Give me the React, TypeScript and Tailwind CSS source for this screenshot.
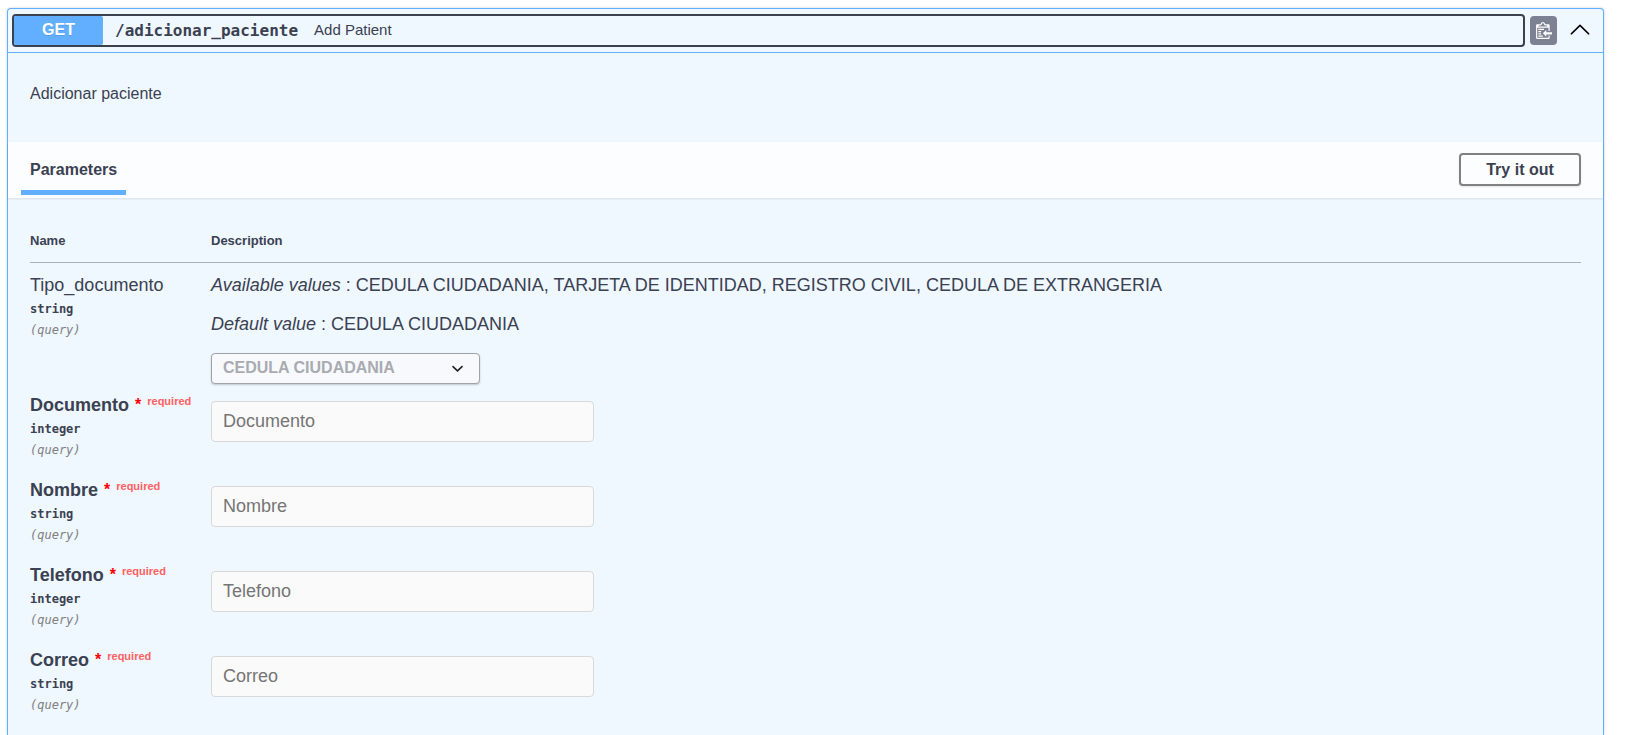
interface Param {
  name: string;
  type: string;
}

const requiredParams: Param[] = [
  { name: "Documento", type: "integer" },
  { name: "Nombre", type: "string" },
  { name: "Telefono", type: "integer" },
  { name: "Correo", type: "string" },
];

const documentTypes = [
  "CEDULA CIUDADANIA",
  "TARJETA DE IDENTIDAD",
  "REGISTRO CIVIL",
  "CEDULA DE EXTRANGERIA",
];

function ClipboardIcon() {
  return (
    <svg viewBox="0 1 14 15" className="h-[17px] w-4" aria-hidden="true">
      <path
        fill="#fff"
        fillRule="evenodd"
        d="M2 13h4v1H2v-1zm5-6H2v1h5V7zm2 3V8l-3 3 3 3v-2h5v-2H9zM4.5 9H2v1h2.5V9zM2 12h2.5v-1H2v1zm9 1h1v2c-.02.28-.11.52-.3.7-.19.18-.42.28-.7.3H1c-.55 0-1-.45-1-1V4c0-.55.45-1 1-1h3c0-1.11.89-2 2-2 1.11 0 2 .89 2 2h3c.55 0 1 .45 1 1v5h-1V6H1v9h10v-2zM2 5h8c0-.55-.45-1-1-1H8c-.55 0-1-.45-1-1s-.45-1-1-1-1 .45-1 1-.45 1-1 1H3c-.55 0-1 .45-1 1z"
      />
    </svg>
  );
}

function ArrowUpIcon() {
  return (
    <svg viewBox="0 0 20 20" className="size-[22px]" aria-hidden="true">
      <path d="M17.418 14.908c.272.268.709.268.979 0s.271-.701 0-.969l-7.908-7.797c-.27-.268-.707-.268-.979 0l-7.908 7.797c-.27.268-.27.701 0 .969.271.268.708.268.979 0L10 7.767l7.418 7.141z" />
    </svg>
  );
}

function SelectArrowIcon() {
  return (
    <svg
      viewBox="0 0 20 20"
      className="pointer-events-none absolute top-1 right-[11px] size-[23px]"
      aria-hidden="true"
    >
      <path
        fill="#222"
        d="M13.418 7.859c.271-.268.709-.268.978 0 .27.268.272.701 0 .969l-3.908 3.83c-.27.268-.707.268-.979 0l-3.908-3.83c-.27-.267-.27-.701 0-.969.271-.268.709-.268.978 0L10 11l3.418-3.141z"
      />
    </svg>
  );
}

function ParamMeta({ type }: { type: string }) {
  return (
    <div className="font-['DejaVu_Sans_Mono',monospace] text-xs">
      <div className="leading-6 font-bold">{type}</div>
      <div className="leading-[18px] text-[#808080] italic">(query)</div>
    </div>
  );
}

function RequiredRow({ name, type }: Param) {
  return (
    <tr>
      <td className="pt-[9px] pb-[10px] align-top">
        <label htmlFor={name} className="flex items-start gap-[6px] text-lg leading-6 font-bold">
          {name}
          <span className="text-base leading-6 text-[#f00]">*</span>
          <span className="text-[11px] leading-4 text-[#ff6060]">required</span>
        </label>
        <ParamMeta type={type} />
      </td>
      <td className="pt-[17px] pb-[10px] align-top">
        <input
          id={name}
          type="text"
          placeholder={name}
          disabled
          className="block h-[41px] w-full max-w-[383px] rounded border border-[#d9d9d9] bg-[#fafafa] px-[11px] text-lg placeholder:text-[#757575]"
        />
      </td>
    </tr>
  );
}

export default function App() {
  return (
    <main className="flex min-h-screen flex-col bg-white pt-2 pr-[22px] pl-[7px] font-['Liberation_Sans',Arial,sans-serif] text-[#3b4151]">
      <section className="flex-1 rounded-t border border-b-0 border-[#61affe] bg-[#eff7ff] shadow-[0_0_3px_rgba(0,0,0,0.19)]">
        <header className="flex items-center border-b border-[#61affe] py-[5px] pr-3 pl-1">
          <button
            type="button"
            className="flex h-[33px] flex-1 items-center rounded border-2 border-[#3b4151] text-left"
          >
            <span className="flex w-[89px] justify-center self-stretch rounded-xs bg-[#61affe] text-base leading-7 font-bold text-white [text-shadow:0_1px_0_rgba(0,0,0,0.1)]">
              GET
            </span>
            <span className="pl-3 font-['DejaVu_Sans_Mono',monospace] text-base font-bold">
              /adicionar_paciente
            </span>
            <span className="pl-4 text-[15px]">Add Patient</span>
          </button>
          <button
            type="button"
            aria-label="Copy to clipboard"
            className="ml-[5px] flex h-[29px] w-[27px] items-center justify-center rounded bg-[#7d8293] pl-px"
          >
            <ClipboardIcon />
          </button>
          <button type="button" aria-label="Collapse operation" className="ml-3 pb-1">
            <ArrowUpIcon />
          </button>
        </header>

        <p className="px-[22px] pt-[29px] pb-9 text-base leading-6">Adicionar paciente</p>

        <div className="flex h-14 items-start justify-between bg-white/80 pt-[11px] pr-[22px] pb-[3px] pl-[13px] shadow-[0_1px_2px_rgba(0,0,0,0.1)]">
          <h4 className="self-end border-b-[5px] border-[#61affe] px-[9px] pb-2 text-base leading-6 font-bold">
            Parameters
          </h4>
          <button
            type="button"
            className="h-[33px] w-[122px] rounded border-2 border-[#808080] text-base leading-6 font-bold shadow-[0_1px_2px_rgba(0,0,0,0.1)]"
          >
            Try it out
          </button>
        </div>

        <div className="px-[22px] pt-[33px]">
          <table className="w-full table-fixed border-collapse">
            <thead>
              <tr className="border-b border-[#a9b0bc] text-left text-[13px] leading-5 font-bold">
                <th className="w-[181px] pb-[11px]">Name</th>
                <th className="pb-[11px]">Description</th>
              </tr>
            </thead>
            <tbody>
              <tr>
                <td className="pt-[10px] align-top">
                  <label htmlFor="Tipo_documento" className="block text-lg leading-6">
                    Tipo_documento
                  </label>
                  <ParamMeta type="string" />
                </td>
                <td className="pt-[10px] align-top text-lg leading-6">
                  <p>
                    <i>Available values</i> : {documentTypes.join(", ")}
                  </p>
                  <p className="mt-[15px]">
                    <i>Default value</i> : CEDULA CIUDADANIA
                  </p>
                  <div className="relative mt-[17px] w-[269px] max-w-full">
                    <select
                      id="Tipo_documento"
                      disabled
                      defaultValue={documentTypes[0]}
                      className="block h-[31px] w-full appearance-none rounded border border-[#a0a3a8] bg-[#f7f9fd] pr-10 pb-px pl-[11px] text-base leading-6 font-bold text-[#a9abb0] opacity-100 shadow-[0_1px_2px_rgba(0,0,0,0.2)]"
                    >
                      {documentTypes.map((value) => (
                        <option key={value}>{value}</option>
                      ))}
                    </select>
                    <SelectArrowIcon />
                  </div>
                </td>
              </tr>
              {requiredParams.map((param) => (
                <RequiredRow key={param.name} {...param} />
              ))}
            </tbody>
          </table>
        </div>
      </section>
    </main>
  );
}
